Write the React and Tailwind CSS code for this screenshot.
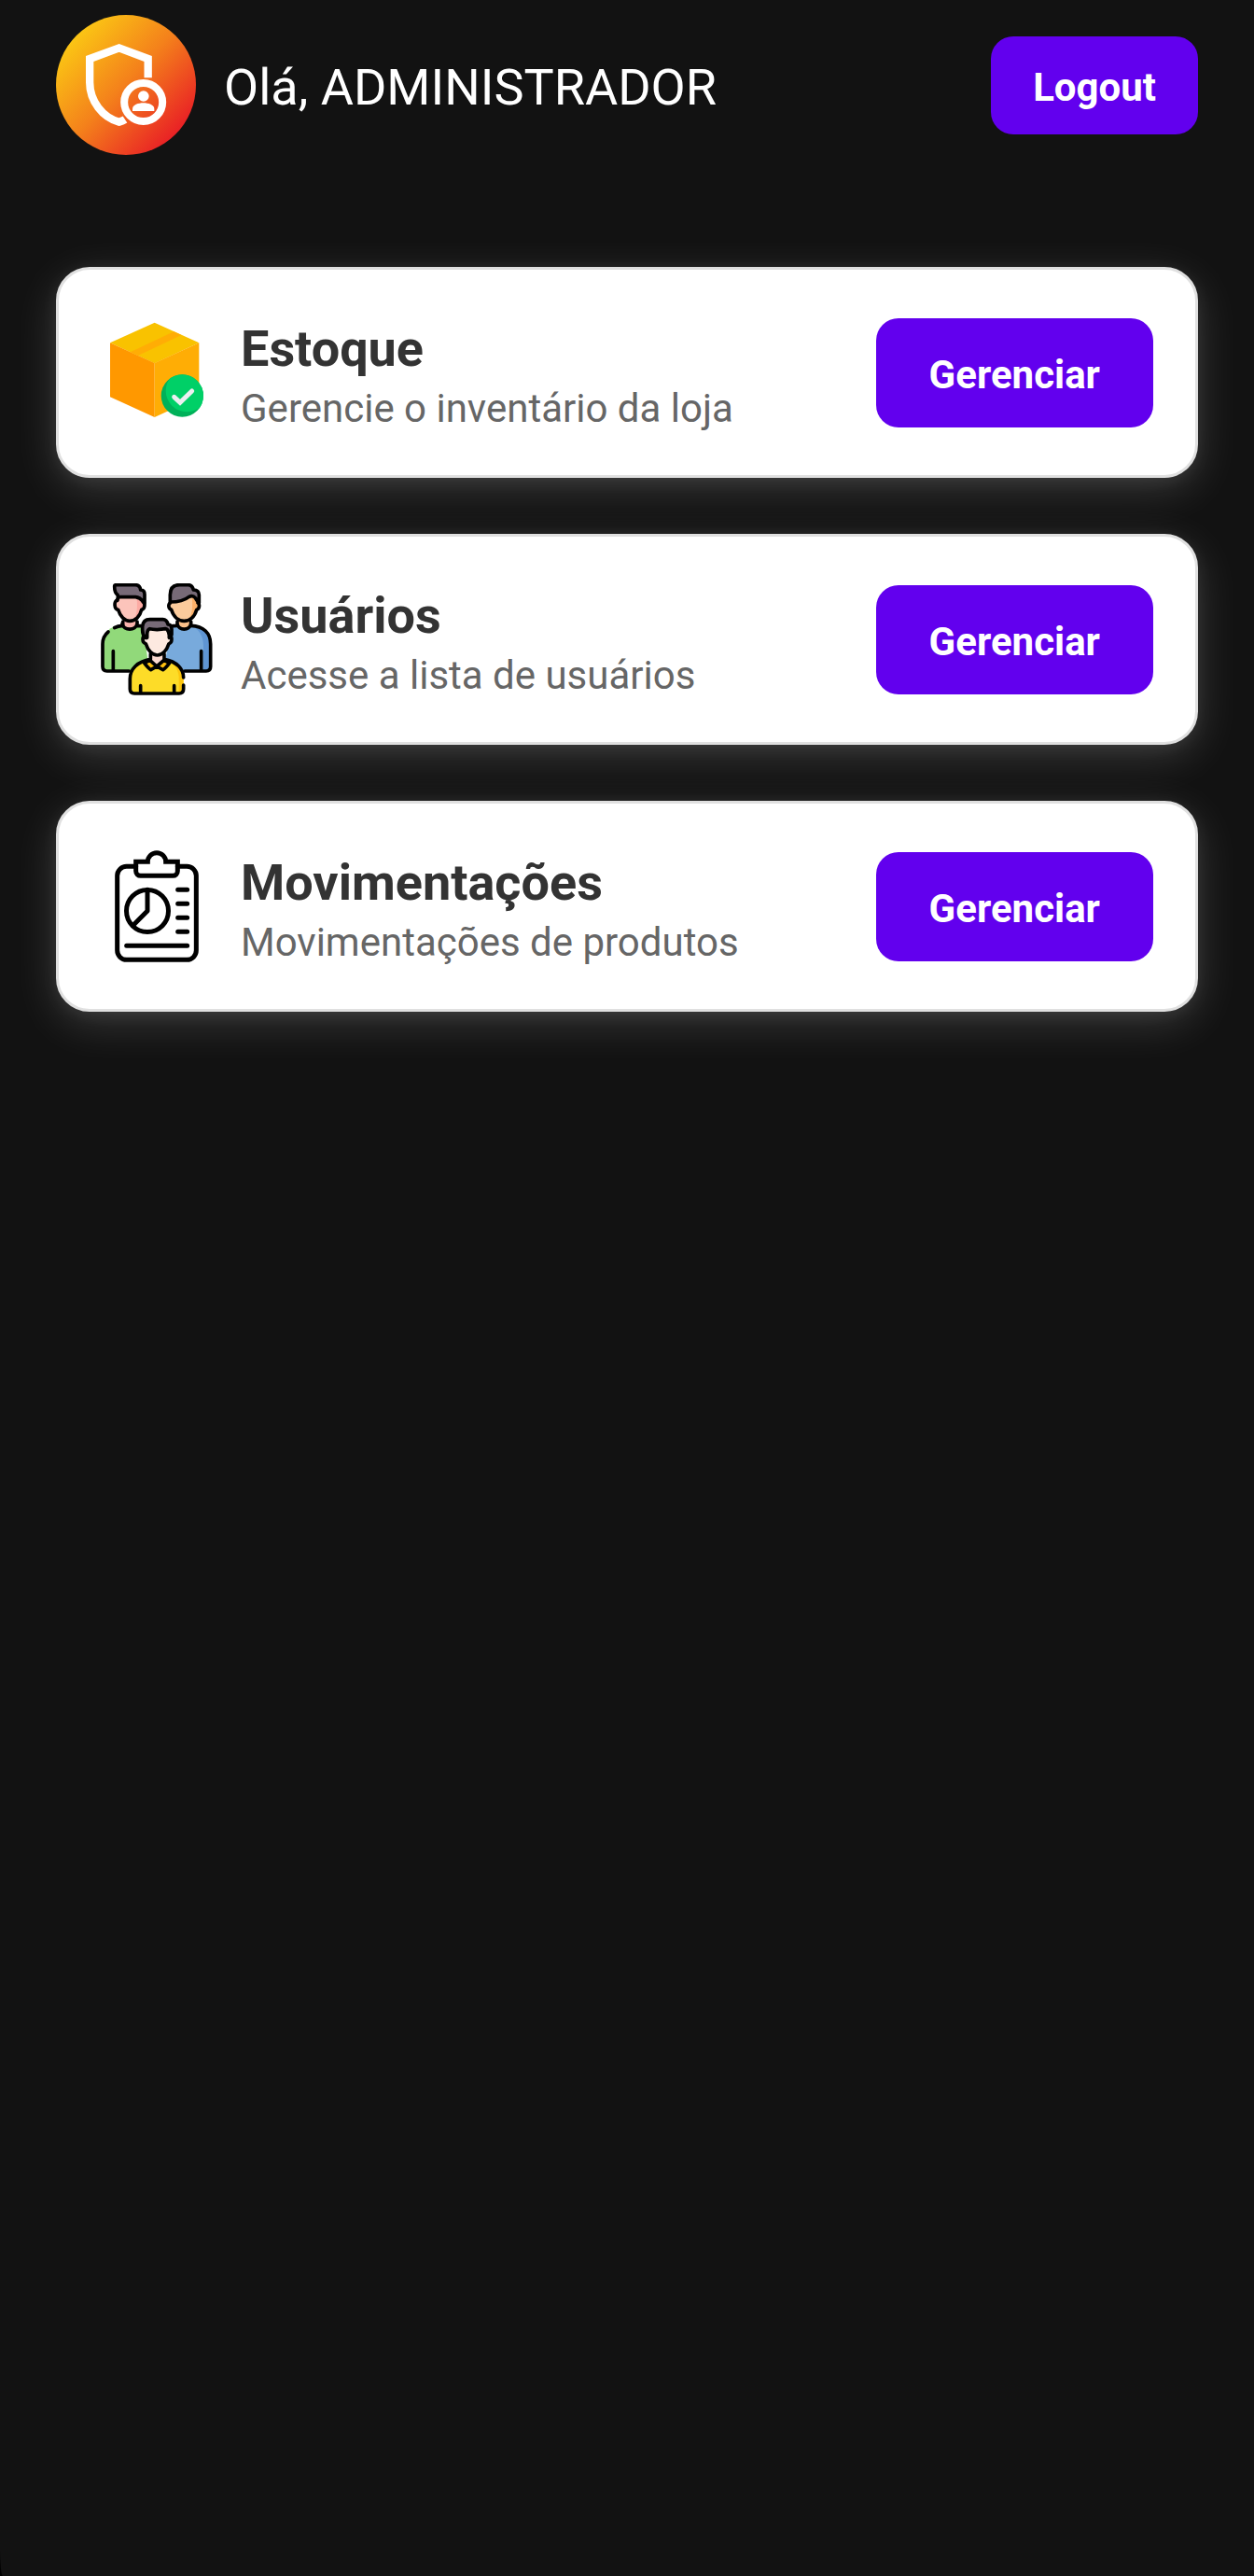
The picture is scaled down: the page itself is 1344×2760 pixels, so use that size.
function AdminBadge() {
  return (
    <svg viewBox="60 48 450 450" className="size-[150px] shrink-0" role="img" aria-label="Administrador">
      <defs>
        <linearGradient id="badge" x1="0.12" y1="0.14" x2="0.86" y2="0.84">
          <stop offset="0" stopColor="#fbc814" />
          <stop offset="0.5" stopColor="#f4811b" />
          <stop offset="1" stopColor="#e92225" />
        </linearGradient>
      </defs>
      <circle cx="285" cy="273" r="225" fill="url(#badge)" />
      <path
        d="M356 250V189L263 154L168.500 189V265C168.500 325 210 378 263 392C270 390 276 388 282 384"
        fill="none"
        stroke="#fff"
        strokeWidth="25"
      />
      <circle cx="341" cy="328.500" r="61.500" fill="none" stroke="#fff" strokeWidth="24" />
      <circle cx="341.500" cy="309" r="17.500" fill="#fff" />
      <path d="M306 357V350C306 337 325 331 341 331S376 337 376 350V357Z" fill="#fff" />
    </svg>
  );
}

function BoxIcon() {
  return (
    <svg viewBox="54 57 360 360" className="size-[120px] shrink-0" aria-hidden="true">
      <defs>
        <clipPath id="check-disc">
          <circle cx="316" cy="312" r="68" />
        </clipPath>
      </defs>
      <path d="M227 77L370 142L227 208L84 142Z" fill="#f9c200" />
      <path d="M84 142L227 207V381L84 316Z" fill="#ff9800" />
      <path d="M227 207L370 142V316L227 381Z" fill="#ffad05" />
      <path d="M149 172L289 106L313 117L174 183Z" fill="#ffad05" />
      <circle cx="316" cy="312" r="68" fill="#00b159" />
      <circle cx="331" cy="296" r="68" fill="#00d067" clipPath="url(#check-disc)" />
      <path d="M290 316L309 334L347 297" fill="none" stroke="#eceff1" strokeWidth="15" strokeLinecap="round" />
    </svg>
  );
}

function UsersIcon() {
  return (
    <svg
      viewBox="54 75 360 360"
      className="size-[120px] shrink-0"
      fill="none"
      stroke="#000"
      strokeWidth="11"
      strokeLinecap="round"
      strokeLinejoin="round"
      aria-hidden="true"
    >
      <g stroke="none">
        <path d="M60 357V268C60 235 85 211 120 210H190L205 320L148 357Z" fill="#91d97a" />
        <path d="M407 357V268C407 235 382 211 347 210H280L262 320L320 357Z" fill="#78aadc" />
        <path d="M345 211C385 213 407 235 407 268V345Q407 357 394 357H384V275C384 245 370 222 345 211Z" fill="#5f95d3" />
        <path d="M124 190H171V206C165 226 130 226 124 206Z" fill="#f9b3ad" />
        <path d="M299 190H344V206C338 226 305 226 299 206Z" fill="#fbc08a" />
        <path d="M107 118H190V133C200 140 198 158 185 160C180 182 165 196 147 196C132 196 116 182 110 160C96 158 96 132 107 130Z" fill="#fcc4bb" />
        <path d="M170 125L190 130C200 140 198 158 185 160C181 178 170 190 158 194C172 175 172 150 170 125Z" fill="#fcaaa3" />
        <path d="M278 130L340 112L365 136C374 142 372 156 362 160C356 184 340 196 322 196S288 184 281 160C270 156 270 140 278 136Z" fill="#fbcb9c" />
        <path d="M347 118L365 136C374 142 372 156 362 160C357 180 345 190 334 194C350 175 350 145 347 118Z" fill="#fbb069" />
      </g>
      <path d="M98 218Q108 212 125 211V198M78 231Q60 246 60 270V343Q60 357 74 357H145M94 293V355" />
      <path d="M123 205C128 228 166 228 171 205V198M171 211Q182 211 190 213" />
      <path d="M107 130C96 130 96 158 110 160C116 182 132 196 147 196C165 196 180 182 185 160C196 158 198 140 190 135" />
      <path d="M110 122L108 112C98 105 98 95 98 84Q98 80 104 80H165Q180 80 182 96Q195 97 195 110V138C188 132 184 121 166 119H118Q107 118 107 130Z" fill="#776a77" />
      <path d="M344 211C385 213 407 235 407 270V343Q407 357 393 357H324M377 293V355" />
      <path d="M300 198V205C305 228 339 228 344 205V198M298 211Q287 211 279 213" />
      <path d="M277 138C271 142 270 156 281 160C288 184 305 196 322 196S356 184 362 160C372 156 373 142 366 138" />
      <path d="M277 138V112Q277 80 307 80H335Q348 80 352 96Q370 97 370 112V138Q362 130 358 122Q350 112 338 118C322 131 305 135 277 135Z" fill="#776a77" />
      <g stroke="none">
        <path d="M148 429V382C148 350 170 328 205 320H262C300 328 320 350 320 380V429Z" fill="#fddc28" />
        <path d="M275 326C303 334 320 352 320 380V429H305V375C303 352 292 338 275 326Z" fill="#fcc50e" />
        <path d="M215 295H257V322L235 344L213 322Z" fill="#fbd9d0" />
      </g>
      <path d="M320 378C320 350 298 326 258 319V302M214 302V319C172 326 148 350 148 382V415Q148 429 162 429H306Q320 429 320 415V402M182 404V427M290 404V427" />
      <path d="M212 322L234 342L215 353Q207 348 194 331ZM257 322L234 342L254 353Q262 348 275 331Z" fill="#fdbf0f" />
      <path d="M197 242C186 246 186 266 199 269C205 290 220 306 236 306S266 290 273 269C285 266 284 246 276 242L265 215H205Z" fill="#fde9e0" />
      <path d="M197 250Q188 240 188 225V214Q190 191 212 191H254Q266 191 270 207Q282 207 282 222V240L274 250V240Q272 222 262 221Q250 223 235 224Q220 223 211 221Q203 224 203 240V250Z" fill="#776a77" />
    </svg>
  );
}

function ReportIcon() {
  return (
    <svg
      viewBox="54 63 360 360"
      className="size-[120px] shrink-0"
      fill="none"
      stroke="#000"
      strokeWidth="15"
      strokeLinecap="round"
      aria-hidden="true"
    >
      <path d="M167 115H137A30 30 0 0 0 107 145V385A30 30 0 0 0 137 415H331A30 30 0 0 0 361 385V145A30 30 0 0 0 331 115H301" />
      <path d="M167 100H205A29 29 0 0 1 263 100H301V130A15 15 0 0 1 286 145H182A15 15 0 0 1 167 130Z" />
      <circle cx="204" cy="258" r="67.500" />
      <path d="M204 190V258L157 305" strokeLinejoin="round" />
      <path d="M302 190H332M302 235H332M302 280H332M302 325H332M137 370H332" />
    </svg>
  );
}

const sections = [
  { title: "Estoque", text: "Gerencie o inventário da loja", Icon: BoxIcon },
  { title: "Usuários", text: "Acesse a lista de usuários", Icon: UsersIcon },
  { title: "Movimentações", text: "Movimentações de produtos", Icon: ReportIcon },
];

function SectionCard({ title, text, Icon }) {
  return (
    <section className="flex min-h-[226px] items-center rounded-[36px] border-[3px] border-[#e0e0e0] bg-white px-[45px] py-10 shadow-[0_12px_48px_rgba(255,255,255,0.16),0_4px_20px_rgba(255,255,255,0.07)]">
      <Icon />
      <div className="ml-[30px] min-w-0 flex-1 pt-[6px]">
        <h2 className="text-[54px] leading-[64px] font-bold text-[#333333]">{title}</h2>
        <p className="mt-2 text-[42px] leading-[48px] text-[#666666]">{text}</p>
      </div>
      <button
        type="button"
        aria-label={`Gerenciar ${title}`}
        className="shrink-0 rounded-[24px] bg-[#6200ee] px-[57px] pt-[32px] pb-[28px] text-[42px] leading-[57px] font-bold text-white"
      >
        Gerenciar
      </button>
    </section>
  );
}

export default function App() {
  return (
    <div className="min-h-screen bg-black font-[Roboto,sans-serif]">
      <div className="min-h-screen bg-[#121212] px-[60px] pt-4 [border-bottom-left-radius:3px_30px]">
        <header className="flex items-center">
          <AdminBadge />
          <h1 className="ml-[30px] flex-1 pt-[6px] text-[54px] leading-[64px] text-white">Olá, ADMINISTRADOR</h1>
          <button
            type="button"
            className="shrink-0 rounded-[24px] bg-[#6200ee] px-[45px] pt-[26px] pb-[22px] text-[42px] leading-[57px] font-bold text-white"
          >
            Logout
          </button>
        </header>
        <main className="mt-[120px] flex flex-col gap-[60px]">
          {sections.map((section) => (
            <SectionCard key={section.title} {...section} />
          ))}
        </main>
      </div>
    </div>
  );
}
